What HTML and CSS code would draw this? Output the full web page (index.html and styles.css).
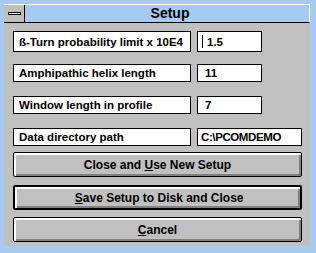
FILE: index.html
```html
<!DOCTYPE html>
<html lang="en">
<head>
    <meta charset="UTF-8">
    <title>Setup</title>
    <link rel="stylesheet" href="styles.css">
</head>
<body>
  <div class="frame">
    <div class="window">
      <div class="titlebar">
        <div class="sysmenu"><span class="dash"></span></div>
        <div class="title">Setup</div>
      </div>
      <div class="body">
        <div class="row row1">
          <div class="label">ß-Turn probability limit x 10E4</div>
          <div class="value"><span class="caret"></span>1.5</div>
        </div>
        <div class="row row2">
          <div class="label">Amphipathic helix length</div>
          <div class="value">11</div>
        </div>
        <div class="row row3">
          <div class="label">Window length in profile</div>
          <div class="value">7</div>
        </div>
        <div class="row row4">
          <div class="label">Data directory path</div>
          <div class="value wide">C:\PCOMDEMO</div>
        </div>
        <button class="btn b1">Close and <u>U</u>se New Setup</button>
        <button class="btn b2 default">&nbsp;<u>S</u>ave Setup to Disk and Close</button>
        <button class="btn b3"><u>C</u>ancel</button>
      </div>
    </div>
  </div>
</body>
</html>
```

FILE: styles.css
```css
body {
  margin: 0;
  background-color: #a6caf0;
}

.frame {
  width: 316px;
  height: 253px;
  box-sizing: border-box;
  padding: 4px 6px 7px 4px;
  background-color: #a6caf0;
  font-family: "Liberation Sans", Arial, sans-serif;
  font-weight: bold;
  font-size: 11.5px;
  color: #000;
}

.window {
  display: flex;
  flex-direction: column;
  height: 100%;
}

.titlebar {
  display: flex;
  height: 19px;
  border-top: 1px solid #fff;
  border-right: 1px solid #fff;
  border-bottom: 1px solid #000;
  box-sizing: border-box;
  background-color: #a6caf0;
}

.sysmenu {
  width: 20px;
  background-color: #c0c0c0;
  border-right: 1px solid #000;
  display: flex;
  align-items: center;
  justify-content: center;
}

.dash {
  width: 11px;
  height: 1px;
  background-color: #fff;
  border: 1px solid #000;
}

.title {
  flex: 1;
  text-align: center;
  font-size: 14px;
  line-height: 17px;
  padding-left: 6px;
}

.body {
  flex: 1;
  background-color: #c0c0c0;
  padding: 8px 8px 0 9px;
  display: flex;
  flex-direction: column;
}

.row {
  display: flex;
  gap: 6px;
  height: 18px;
}

.row1 {
  height: 21px;
}

.row2 {
  margin-top: 12px;
}

.row3,
.row4 {
  margin-top: 14px;
}

.label,
.value {
  background-color: #fff;
  border: 1px solid #000;
  box-sizing: border-box;
  display: flex;
  align-items: center;
  white-space: nowrap;
}

.label {
  width: 178px;
  padding-left: 5px;
}

.value {
  width: 65px;
  padding-left: 7px;
}

.value.wide {
  width: 105px;
  padding-left: 3px;
  letter-spacing: -0.4px;
}

.caret {
  width: 1px;
  height: 13px;
  background-color: #000;
  margin: 0 4px 0 -3px;
}

.btn {
  display: block;
  width: 289px;
  height: 25px;
  padding: 0;
  font: inherit;
  font-size: 12px;
  color: #000;
  background-color: #c0c0c0;
  border: 1px solid #000;
  border-radius: 2px;
  box-shadow: inset 1px 1px 0 #fff, inset 2px 2px 0 #fff, inset -1px -1px 0 #808080, inset -2px -2px 0 #808080;
  text-align: center;
}

.b1 {
  margin-top: 6px;
}

.b2 {
  margin-top: 8px;
}

.b3 {
  margin-top: 7px;
}

.default {
  border-width: 2px;
}
```
